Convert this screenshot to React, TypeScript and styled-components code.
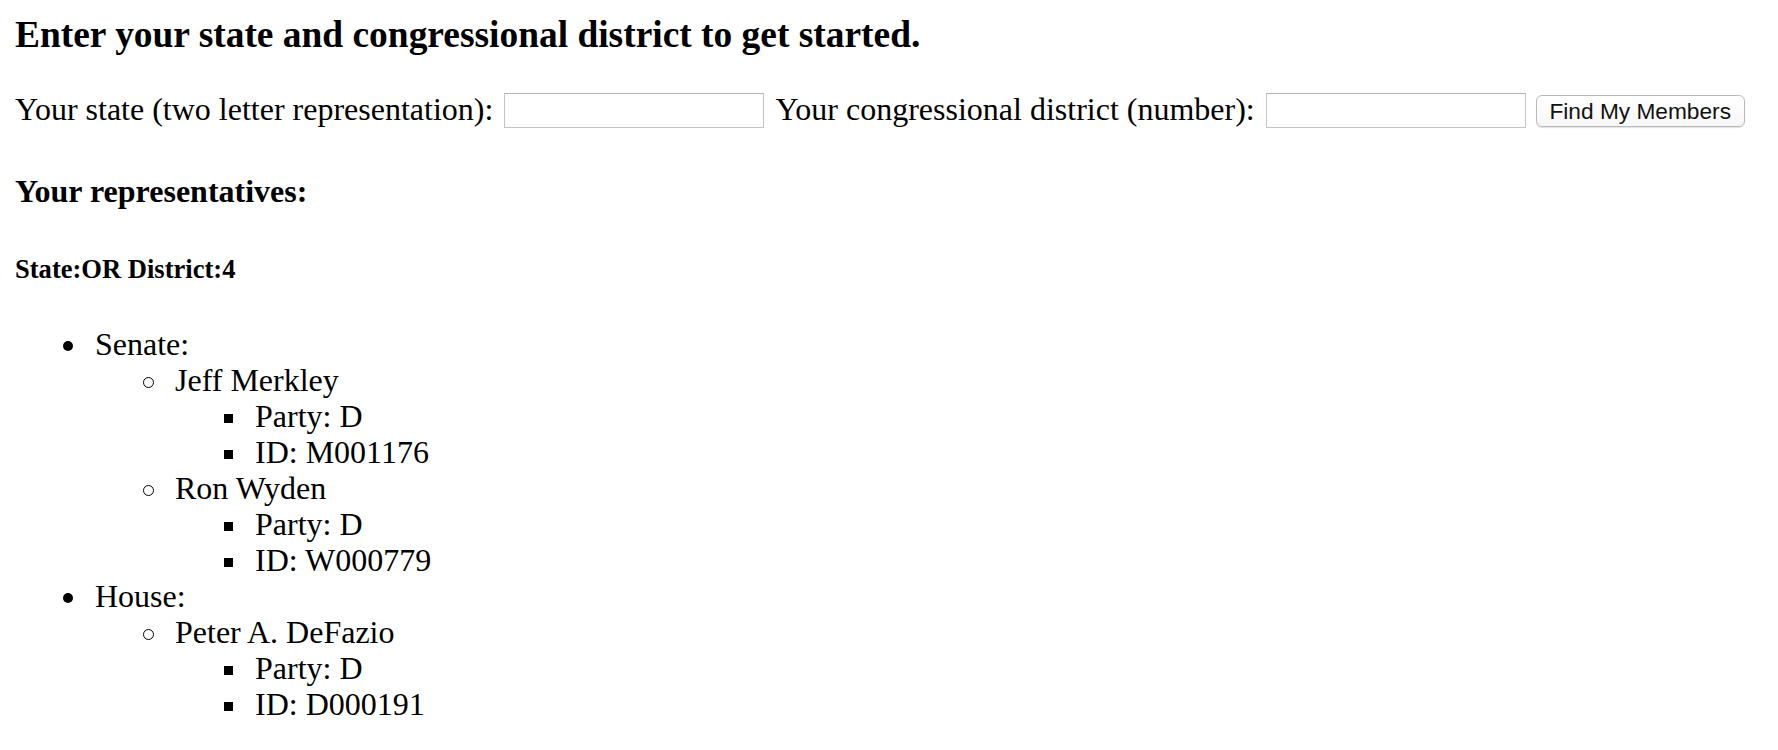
import React from "react";
import styled, { createGlobalStyle, css } from "styled-components";

const GlobalStyle = createGlobalStyle`
  html, body {
    margin: 0;
    padding: 0;
    background: #ffffff;
  }
  body {
    font-family: "Liberation Serif", "Times New Roman", serif;
    font-size: 32px;
    color: #000000;
  }
`;

const Page = styled.div`
  padding: 0 15px;
`;

const Title = styled.h3`
  font-size: 37.44px;
  line-height: 43px;
  font-weight: bold;
  margin: 13px 0 35px;
`;

const Form = styled.form`
  display: flex;
  align-items: flex-start;
  gap: 11px;
  line-height: 36.8px;
`;

const Label = styled.label`
  white-space: nowrap;
`;

const TextInput = styled.input`
  box-sizing: border-box;
  width: 260px;
  height: 35px;
  margin-top: 2px;
  border: 1px solid #c3c3c3;
  border-top-color: #b4b4b4;
  padding: 2px 4px;
  font-size: 20px;
  background: #ffffff;
  outline: none;
`;

const Button = styled.button`
  box-sizing: border-box;
  width: 209px;
  height: 32px;
  margin-top: 4px;
  margin-left: -1px;
  border: 1px solid #b9b9b9;
  border-radius: 6px;
  background: linear-gradient(#ffffff, #f7f7f7);
  box-shadow: 0 1px 1px rgba(0, 0, 0, 0.12);
  font-family: "Liberation Sans", Arial, sans-serif;
  font-size: 22.7px;
  color: #111111;
  padding: 0;
`;

const SubHeading = styled.h4`
  font-size: 32px;
  line-height: 36.8px;
  font-weight: bold;
  margin: 45px 0 0;
`;

const SmallHeading = styled.h5`
  font-size: 26.56px;
  line-height: 30.5px;
  font-weight: bold;
  margin: 44px 0 0;
`;

const markerStyles: Record<number, ReturnType<typeof css>> = {
  1: css`
    width: 10px;
    height: 10px;
    margin-left: -32px;
    margin-right: 22px;
    vertical-align: 4px;
    border-radius: 50%;
    background: #000000;
  `,
  2: css`
    width: 11px;
    height: 11px;
    margin-left: -32.5px;
    margin-right: 21.5px;
    vertical-align: 3.5px;
    border-radius: 50%;
    border: 1.5px solid #000000;
  `,
  3: css`
    width: 9px;
    height: 9px;
    margin-left: -31.5px;
    margin-right: 22.5px;
    vertical-align: 4.5px;
    background: #000000;
  `,
};

const List = styled.ul<{ $level: number }>`
  margin: ${(p) => (p.$level === 1 ? "42px 0 0" : "0")};
  padding-left: 80px;
  line-height: 36px;
  list-style: none;
`;

const Item = styled.li<{ $level: number }>`
  &::before {
    content: "";
    display: inline-block;
    box-sizing: border-box;
    ${(p) => markerStyles[p.$level]}
  }
`;

type Member = { name: string; party: string; id: string };

const chambers: { label: string; members: Member[] }[] = [
  {
    label: "Senate:",
    members: [
      { name: "Jeff Merkley", party: "D", id: "M001176" },
      { name: "Ron Wyden", party: "D", id: "W000779" },
    ],
  },
  {
    label: "House:",
    members: [{ name: "Peter A. DeFazio", party: "D", id: "D000191" }],
  },
];

export default function App() {
  return (
    <>
      <GlobalStyle />
      <Page>
        <Title>Enter your state and congressional district to get started.</Title>
        <Form onSubmit={(e) => e.preventDefault()}>
          <Label htmlFor="state">Your state (two letter representation):</Label>
          <TextInput id="state" type="text" />
          <Label htmlFor="district">Your congressional district (number):</Label>
          <TextInput id="district" type="text" />
          <Button type="submit">Find My Members</Button>
        </Form>
        <SubHeading>Your representatives:</SubHeading>
        <SmallHeading>State:OR District:4</SmallHeading>
        <List $level={1}>
          {chambers.map((c) => (
            <Item $level={1} key={c.label}>
              {c.label}
              <List $level={2}>
                {c.members.map((m) => (
                  <Item $level={2} key={m.id}>
                    {m.name}
                    <List $level={3}>
                      <Item $level={3}>Party: {m.party}</Item>
                      <Item $level={3}>ID: {m.id}</Item>
                    </List>
                  </Item>
                ))}
              </List>
            </Item>
          ))}
        </List>
      </Page>
    </>
  );
}
